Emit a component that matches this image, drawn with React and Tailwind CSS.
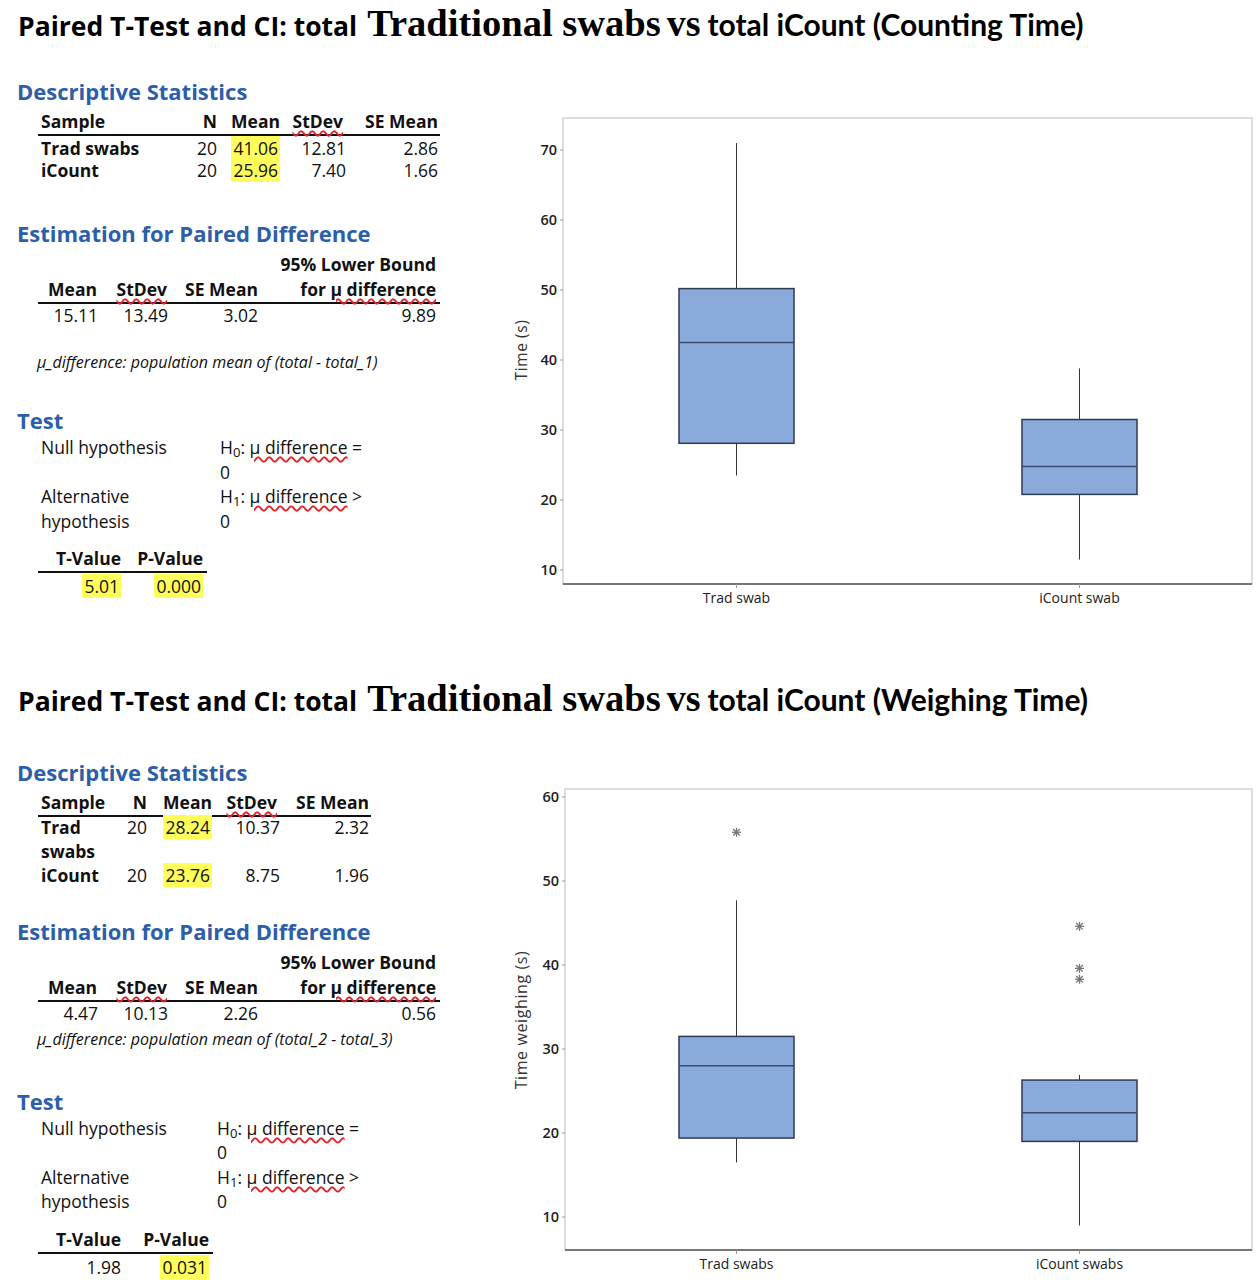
import React from 'react';

const BODY = "font-['Open_Sans','Noto_Sans',sans-serif]";
const HEAD = "font-['Open_Sans','Noto_Sans',sans-serif] font-bold text-[22px] leading-[26px] text-[#2d5ea9] pl-[17px]";
const SQUIG = 'underline decoration-wavy decoration-[#e0242a] decoration-[1.8px] underline-offset-[2px]';
const CHART_FONT = "'Open Sans', 'Noto Sans', sans-serif";

const COUNTING = {
  title: '(Counting Time)',
  desc: {
    cols: 'grid-cols-[152px_27px_63px_66px_94px]',
    width: 'w-[402px]',
    rowLeading: 'leading-[22px]',
    rowsPad: 'pt-[1px]',
    rows: [
      ['Trad swabs', '20', '41.06', '12.81', '2.86'],
      ['iCount', '20', '25.96', '7.40', '1.66']
    ]
  },
  est: ['15.11', '13.49', '3.02', '9.89'],
  note: 'µ_difference: population mean of (total - total_1)',
  hCol: 'grid-cols-[179px_1fr]',
  tp: { cols: 'grid-cols-[85px_84px]', t: '5.01', p: '0.000', tHl: true }
};

const WEIGHING = {
  title: '(Weighing Time)',
  desc: {
    cols: 'grid-cols-[72px_37px_65px_68px_91px]',
    width: 'w-[333px]',
    rowLeading: 'leading-[24.2px]',
    rowsPad: '-mt-[2px]',
    rows: [
      ['Trad swabs', '20', '28.24', '10.37', '2.32'],
      ['iCount', '20', '23.76', '8.75', '1.96']
    ]
  },
  est: ['4.47', '10.13', '2.26', '0.56'],
  note: 'µ_difference: population mean of (total_2 - total_3)',
  hCol: 'grid-cols-[176px_1fr]',
  tp: { cols: 'grid-cols-[85px_90px]', t: '1.98', p: '0.031', tHl: false }
};

const Hl = ({ children }) => <span className="bg-[#ffff5c] px-[2px]">{children}</span>;
const Squig = ({ children }) => <span className={SQUIG}>{children}</span>;

const Title = ({ suffix }) => (
  <h2 className="flex items-baseline h-[50px] pl-[18px] pt-[4px] text-black whitespace-nowrap">
    <span className="font-['Open_Sans','Noto_Sans',sans-serif] font-bold text-[26.5px] leading-none">Paired T-Test and CI: total</span>
    <span className="font-['Liberation_Serif','DejaVu_Serif',serif] font-bold text-[38.5px] leading-none ml-[10px]">Traditional swabs</span>
    <span className="font-['Liberation_Serif','DejaVu_Serif',serif] font-bold text-[38px] leading-none ml-[6px]">vs</span>
    <span className="font-['Lato','Noto_Sans',sans-serif] font-bold text-[30px] leading-none ml-[7px]">total iCount {suffix}</span>
  </h2>
);

const DescTable = ({ cols, width, rowLeading, rowsPad, rows }) => (
  <div className={`${width} ml-[38px] text-[17.5px]`}>
    <div className={`grid ${cols} font-bold leading-[23px] border-b-2 border-[#111] pb-[1px]`}>
      <div className="pl-[3px]">Sample</div>
      <div className="text-right">N</div>
      <div className="text-right">Mean</div>
      <div className="text-right pr-[3px]"><Squig>StDev</Squig></div>
      <div className="text-right pr-[2px]">SE Mean</div>
    </div>
    <div className={rowsPad}>
      {rows.map(([name, n, mean, sd, se]) => (
        <div key={name} className={`grid ${cols} ${rowLeading}`}>
          <div className="pl-[3px] font-bold">{name}</div>
          <div className="text-right">{n}</div>
          <div className="text-right"><Hl>{mean}</Hl></div>
          <div className="text-right">{sd}</div>
          <div className="text-right pr-[2px]">{se}</div>
        </div>
      ))}
    </div>
  </div>
);

const EstTable = ({ values }) => (
  <div className="w-[402px] ml-[38px] text-[17.5px]">
    <div className="text-right font-bold leading-[22px] pr-[4px]">95% Lower Bound</div>
    <div className="grid grid-cols-[62px_70px_90px_180px] font-bold leading-[23px] mt-[3px] border-b-2 border-[#111] pb-[1px]">
      <div className="text-right pr-[3px]">Mean</div>
      <div className="text-right pr-[3px]"><Squig>StDev</Squig></div>
      <div className="text-right pr-[2px]">SE Mean</div>
      <div className="text-right pr-[4px]">for <Squig>µ difference</Squig></div>
    </div>
    <div className="grid grid-cols-[62px_70px_90px_180px] leading-[22px]">
      {values.map((v, i) => (
        <div key={i} className={i === 3 ? 'text-right pr-[4px]' : 'text-right pr-[2px]'}>{v}</div>
      ))}
    </div>
  </div>
);

const TestBlock = ({ hCol, tp }) => (
  <>
    <div className={`grid ${hCol} pl-[41px] text-[17.5px] leading-[24.6px]`}>
      <div>Null hypothesis</div>
      <div>H<sub>0</sub>: <Squig>µ difference</Squig> =</div>
      <div />
      <div>0</div>
      <div>Alternative</div>
      <div>H<sub>1</sub>: <Squig>µ difference</Squig> &gt;</div>
      <div>hypothesis</div>
      <div>0</div>
    </div>
    <div className="ml-[38px] mt-[14px] w-fit text-[17.5px]">
      <div className={`grid ${tp.cols} font-bold leading-[23px] border-b-2 border-[#111] pb-[1px]`}>
        <div className="text-right pr-[2px]">T-Value</div>
        <div className="text-right pr-[4px]">P-Value</div>
      </div>
      <div className={`grid ${tp.cols} leading-[22px] mt-[2px]`}>
        <div className="text-right pr-[2px]">{tp.tHl ? <Hl>{tp.t}</Hl> : tp.t}</div>
        <div className="text-right pr-[4px]"><Hl>{tp.p}</Hl></div>
      </div>
    </div>
  </>
);

const Asterisk = ({ x, y }) => (
  <g stroke="#777" strokeWidth="1.3">
    <line x1={x - 4.5} y1={y} x2={x + 4.5} y2={y} />
    <line x1={x} y1={y - 4.5} x2={x} y2={y + 4.5} />
    <line x1={x - 3.3} y1={y - 3.3} x2={x + 3.3} y2={y + 3.3} />
    <line x1={x - 3.3} y1={y + 3.3} x2={x + 3.3} y2={y - 3.3} />
  </g>
);

const BoxPlot = ({ height, frame, scale, ticks, boxes, yLabel, xLabels, labelY, labelSize }) => {
  const y = (v) => scale.y0 + (scale.v0 - v) * scale.k;
  return (
    <svg width="757" height={height} viewBox={`0 0 757 ${height}`} className="block">
      <rect x={frame.left} y={frame.top} width={frame.right - frame.left} height={frame.bottom - frame.top} fill="#fff" stroke="#d4d4d4" strokeWidth="1.5" />
      <line x1={frame.left} y1={frame.bottom} x2={frame.right} y2={frame.bottom} stroke="#555" strokeWidth="1.5" />
      {ticks.map((t) => (
        <g key={t}>
          <line x1={frame.left - 3} y1={y(t)} x2={frame.left} y2={y(t)} stroke="#999" />
          <text x={frame.left - 6} y={y(t) + 5} textAnchor="end" fontFamily={CHART_FONT} fontSize="14.5" fontWeight="600" fill="#222">{t}</text>
        </g>
      ))}
      {boxes.map((b, i) => (
        <g key={i}>
          <line x1={b.cx} y1={frame.bottom} x2={b.cx} y2={frame.bottom + 4} stroke="#999" />
          <line x1={b.cx} y1={y(b.hi)} x2={b.cx} y2={y(b.lo)} stroke="#333" strokeWidth="1" />
          <rect x={b.cx - 57.5} y={y(b.q3)} width="115" height={y(b.q1) - y(b.q3)} fill="#8aaadc" stroke="#2e3b52" strokeWidth="1.5" />
          <line x1={b.cx - 57.5} y1={y(b.med)} x2={b.cx + 57.5} y2={y(b.med)} stroke="#3b4a68" strokeWidth="1.5" />
          {(b.out || []).map((o) => <Asterisk key={o} x={b.cx} y={y(o)} />)}
          <text x={b.cx} y={labelY} textAnchor="middle" fontFamily={CHART_FONT} fontSize="14" fill="#222">{xLabels[i]}</text>
        </g>
      ))}
      <text transform="rotate(-90 21 250)" x="21" y="256" textAnchor="middle" fontFamily={CHART_FONT} fontSize={labelSize} letterSpacing="0.6" fill="#333">{yLabel}</text>
    </svg>
  );
};

const Section = ({ data, chart, chartTop, leftClasses }) => (
  <section>
    <Title suffix={data.title} />
    <div className="flex">
      <div className={`w-[500px] shrink-0 ${BODY} text-[#111]`}>
        <h3 className={`${HEAD} ${leftClasses.desc}`}>Descriptive Statistics</h3>
        <div className="mt-[6px]"><DescTable {...data.desc} /></div>
        <h3 className={`${HEAD} ${leftClasses.est}`}>Estimation for Paired Difference</h3>
        <div className="mt-[7px]"><EstTable values={data.est} /></div>
        <p className={`italic text-[16px] leading-[20px] pl-[37px] ${leftClasses.note}`}>{data.note}</p>
        <h3 className={`${HEAD} ${leftClasses.test}`}>Test</h3>
        <div className="mt-[2px]"><TestBlock hCol={data.hCol} tp={data.tp} /></div>
      </div>
      <div className={chartTop}>{chart}</div>
    </div>
  </section>
);

export default function App() {
  return (
    <div className="w-[1257px] min-h-[1280px] bg-white overflow-hidden">
      <Section
        data={COUNTING}
        chartTop="mt-[50px]"
        leftClasses={{ desc: 'mt-[28px]', est: 'mt-[39px]', note: 'mt-[26px]', test: 'mt-[35px]' }}
        chart={
          <BoxPlot
            height={520}
            frame={{ left: 63, top: 18, right: 752, bottom: 484 }}
            scale={{ v0: 70, y0: 50, k: 7 }}
            ticks={[70, 60, 50, 40, 30, 20, 10]}
            labelY={503}
            labelSize={15.5}
            yLabel="Time (s)"
            xLabels={['Trad swab', 'iCount swab']}
            boxes={[
              { cx: 236.5, q1: 28.1, q3: 50.2, med: 42.5, lo: 23.5, hi: 71 },
              { cx: 579.5, q1: 20.8, q3: 31.5, med: 24.8, lo: 11.5, hi: 38.8 }
            ]}
          />
        }
      />
      <div className="mt-[55px]">
        <Section
          data={WEIGHING}
          chartTop="mt-[45px]"
          leftClasses={{ desc: 'mt-[34px]', est: 'mt-[30px]', note: 'mt-[5px]', test: 'mt-[39px]' }}
          chart={
            <BoxPlot
              height={510}
              frame={{ left: 65, top: 19, right: 752, bottom: 480 }}
              scale={{ v0: 60, y0: 27, k: 8.4 }}
              ticks={[60, 50, 40, 30, 20, 10]}
              labelY={499}
              labelSize={16}
              yLabel="Time weighing (s)"
              xLabels={['Trad swabs', 'iCount swabs']}
              boxes={[
                { cx: 236.5, q1: 19.4, q3: 31.5, med: 28, lo: 16.5, hi: 47.7, out: [55.8] },
                { cx: 579.5, q1: 19, q3: 26.3, med: 22.4, lo: 9, hi: 26.9, out: [44.6, 39.6, 38.3] }
              ]}
            />
          }
        />
      </div>
    </div>
  );
}
